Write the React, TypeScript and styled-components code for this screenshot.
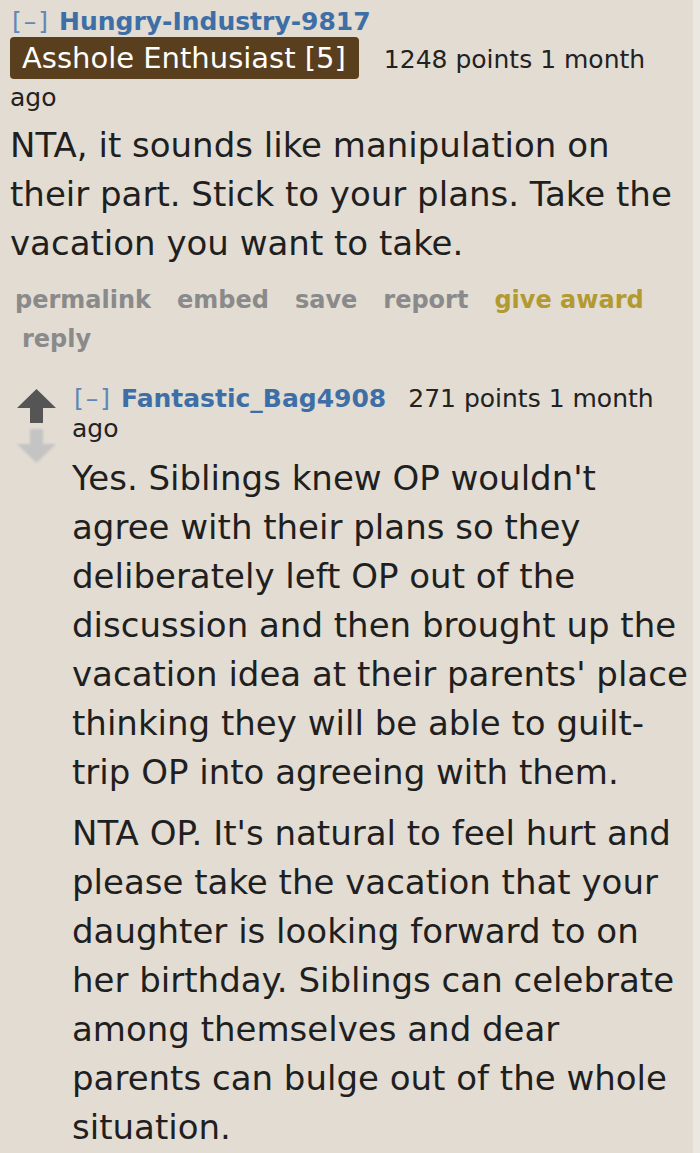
import styled, { createGlobalStyle } from 'styled-components';

const GlobalStyle = createGlobalStyle`
  html, body {
    margin: 0;
    padding: 0;
    background: #ebe8e3;
  }
  body {
    font-family: "DejaVu Sans", Verdana, sans-serif;
    color: #222;
  }
`;

const actions = ['permalink', 'embed', 'save', 'report'];

function App() {
  return (
    <>
      <GlobalStyle />
      <Page>
        <Comment>
          <Tagline>
            <Expand>[–]</Expand>
            <Author>Hungry-Industry-9817</Author>
            <br />
            <Flair>Asshole Enthusiast [5]</Flair>
            <Score>1248 points</Score> 1 month ago
          </Tagline>
          <Body>
            <p>
              NTA, it sounds like manipulation on their part. Stick to your
              plans. Take the vacation you want to take.
            </p>
          </Body>
          <Buttons>
            {actions.map((a) => (
              <Action key={a}>{a}</Action>
            ))}
            <Action $gold>give award</Action>
            <Action $indent>reply</Action>
          </Buttons>
        </Comment>

        <Child>
          <Votes>
            <Arrow $up>
              <svg width="39" height="35" viewBox="0 0 39 35">
                <path d="M19.5 0 L39 19 L26 19 L26 34 L13 34 L13 19 L0 19 Z" fill="#555" />
              </svg>
            </Arrow>
            <Arrow>
              <svg width="39" height="35" viewBox="0 0 39 35">
                <path d="M13 0 L26 0 L26 15 L39 15 L19.5 34 L0 15 L13 15 Z" fill="#c4c4c4" />
              </svg>
            </Arrow>
          </Votes>
          <ChildMain>
            <Tagline>
              <Expand>[–]</Expand>
              <Author>Fantastic_Bag4908</Author>
              <Score>271 points</Score> 1 month ago
            </Tagline>
            <Body $child>
              <p>
                Yes. Siblings knew OP wouldn't agree with their plans so they
                deliberately left OP out of the discussion and then brought up
                the vacation idea at their parents' place thinking they will be
                able to guilt-trip OP into agreeing with them.
              </p>
              <p>
                NTA OP. It's natural to feel hurt and please take the vacation
                that your daughter is looking forward to on her birthday.
                Siblings can celebrate among themselves and dear parents can
                bulge out of the whole situation.
              </p>
            </Body>
          </ChildMain>
        </Child>
      </Page>
    </>
  );
}

const Page = styled.div`
  width: 693px;
  min-height: 1153px;
  box-sizing: border-box;
  background: #e2dcd3;
  padding: 7px 0 0 10px;
`;

const Comment = styled.div`
  display: flex;
  flex-direction: column;
`;

const Tagline = styled.div`
  font-size: 25px;
  line-height: 30px;
  color: #222;
  padding-right: 30px;
`;

const Expand = styled.span`
  color: #5f87b8;
  letter-spacing: 2px;
  margin: 0 9px 0 2px;
`;

const Author = styled.span`
  color: #3d6fa6;
  font-weight: bold;
  margin-right: 22px;
`;

const Flair = styled.span`
  display: inline-block;
  background: #5a3f1e;
  color: #fff;
  font-size: 29px;
  line-height: 42px;
  padding: 0 13px 0 12px;
  border-radius: 4px;
  margin: 0 25px 4px 0;
`;

const Score = styled.span`
  color: #222;
`;

const Body = styled.div<{ $child?: boolean }>`
  font-size: 34px;
  line-height: 49px;
  color: #1f1f1f;
  margin-top: ${(p) => (p.$child ? '10px' : '8px')};

  p {
    margin: 0 0 ${(p) => (p.$child ? '12px' : '0')};
  }
`;

const Buttons = styled.ul`
  list-style: none;
  margin: 13px 0 0;
  padding: 0 0 0 5px;
  display: flex;
  flex-wrap: wrap;
  column-gap: 26px;
  width: 660px;
`;

const Action = styled.li<{ $gold?: boolean; $indent?: boolean }>`
  font-size: 24px;
  line-height: 39px;
  font-weight: bold;
  color: ${(p) => (p.$gold ? '#b39a30' : '#8a8a8a')};
  margin-left: ${(p) => (p.$indent ? '7px' : '0')};
`;

const Child = styled.div`
  display: flex;
  margin-top: 25px;
`;

const Votes = styled.div`
  width: 62px;
  flex-shrink: 0;
  display: flex;
  flex-direction: column;
  align-items: flex-start;
  padding: 5px 0 0 7px;
  box-sizing: border-box;
  gap: 5px;
`;

const Arrow = styled.div<{ $up?: boolean }>`
  width: 39px;
  height: 35px;
  filter: ${(p) => (p.$up ? 'none' : 'blur(0.8px)')};
  svg {
    display: block;
  }
`;

const ChildMain = styled.div`
  flex: 1;
  min-width: 0;
`;

export default App;
